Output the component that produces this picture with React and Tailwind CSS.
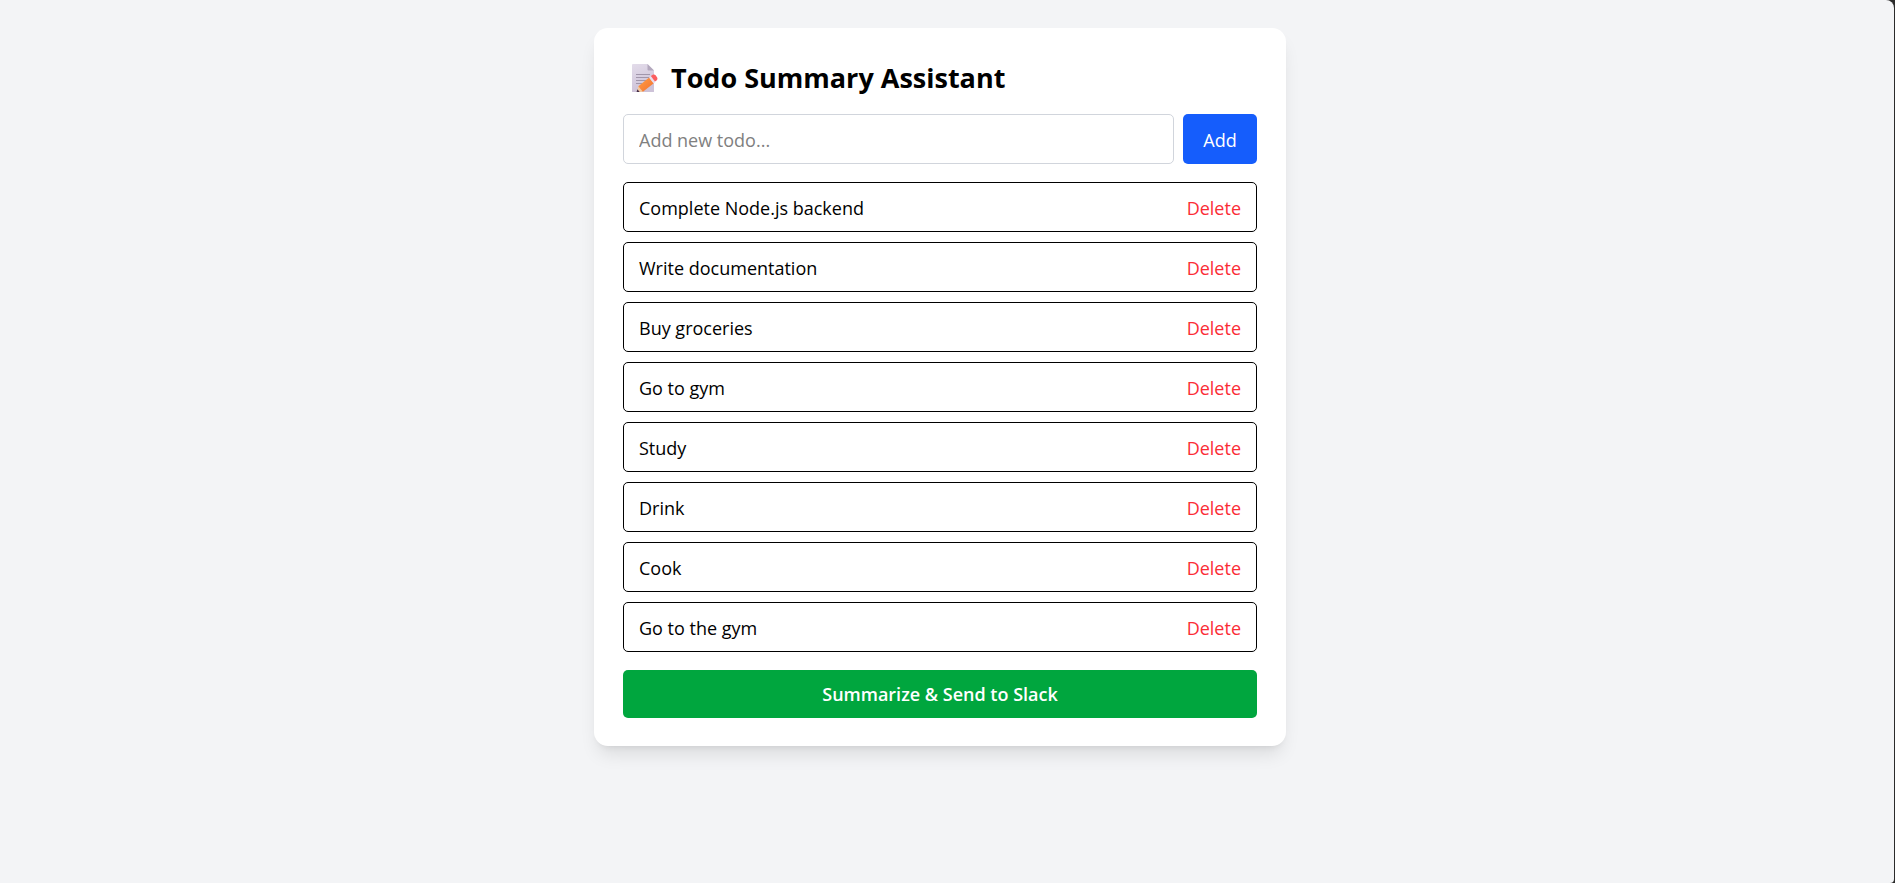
import { useState } from "react";

const initialTodos = [
  "Complete Node.js backend",
  "Write documentation",
  "Buy groceries",
  "Go to gym",
  "Study",
  "Drink",
  "Cook",
  "Go to the gym",
];

function MemoIcon() {
  return (
    <svg viewBox="0 0 26 28" className="h-7 w-[26px] shrink-0" aria-hidden="true">
      <defs>
        <linearGradient id="paper" x1="0" y1="0" x2="0.3" y2="1">
          <stop offset="0" stopColor="#e3dcea" />
          <stop offset="1" stopColor="#cdc2d8" />
        </linearGradient>
        <linearGradient id="pencil" x1="0" y1="0" x2="1" y2="1">
          <stop offset="0" stopColor="#ffa04a" />
          <stop offset="1" stopColor="#f4702c" />
        </linearGradient>
      </defs>
      <path d="M1 0H15.500L22 6.500V27.500A.5 .5 0 0 1 21.500 28H.5A.5 .5 0 0 1 0 27.500V1A1 1 0 0 1 1 0Z" fill="url(#paper)" />
      <path d="M15.500 0L22 6.500H16.500A1 1 0 0 1 15.500 5.500Z" fill="#b3a8bd" />
      <path d="M4 10.500H18M4 13.500H18M4 16.500H14M4 19.500H10" stroke="#a196ab" strokeWidth="1.200" />
      <path d="M4.800 28L6.300 21.900L11.200 28Z" fill="#f3c9a0" />
      <path d="M4.600 28L5.400 25.200L7.700 28Z" fill="#46304a" />
      <path d="M6.300 22.200L17.200 13.400L21.800 19.200L10.900 27.800Z" fill="url(#pencil)" />
      <path d="M17 13.600L19 12L23.600 17.800L21.600 19.400Z" fill="#e9dcec" />
      <path d="M18.900 12.100L20.700 10.800C21.800 10.100 22.800 10.400 23.600 11.300L25 13.200C25.700 14.200 25.500 15.500 24.700 16.200L22.900 17.600Z" fill="#fb5d5f" />
    </svg>
  );
}

export default function App() {
  const [todos, setTodos] = useState(initialTodos);
  const [text, setText] = useState("");

  const addTodo = (event) => {
    event.preventDefault();
    if (!text.trim()) return;
    setTodos([...todos, text.trim()]);
    setText("");
  };

  return (
    <div className="min-h-screen flex bg-[#2b2b2b] pr-px font-['Open_Sans','Noto_Sans',sans-serif] text-lg leading-7 text-black">
      <main className="flex-1 rounded-tr-lg rounded-br-sm bg-gray-100 pt-7 pr-3.5 pb-7">
        <div className="mx-auto w-full max-w-[692px] rounded-[14px] bg-white px-[29px] py-7 shadow-[0_12px_18px_-4px_rgb(0_0_0/0.1),0_5px_7px_-5px_rgb(0_0_0/0.1)]">
          <h1 className="mb-3.5 flex items-center gap-[13px] pl-[9px] text-[27px] leading-[44px] font-bold">
            <MemoIcon />
            Todo Summary Assistant
          </h1>
          <form onSubmit={addTodo} className="mb-[18px] flex gap-[9px]">
            <input
              type="text"
              aria-label="New todo"
              placeholder="Add new todo..."
              value={text}
              onChange={(event) => setText(event.target.value)}
              className="h-[50px] min-w-0 flex-1 rounded-[5px] border border-gray-300 px-[15px] pt-[11px] pb-[9px] placeholder:text-[#808080]"
            />
            <button type="submit" className="w-[74px] rounded-[5px] bg-[#155dfc] pt-[11px] pb-[9px] text-white">
              Add
            </button>
          </form>
          <ul className="mb-[18px] flex flex-col gap-2.5">
            {todos.map((todo, index) => (
              <li
                key={index}
                className="flex items-center justify-between rounded-[5px] border border-black px-[15px] pt-[11px] pb-[9px]"
              >
                <span>{todo}</span>
                <button
                  type="button"
                  aria-label={`Delete ${todo}`}
                  onClick={() => setTodos(todos.filter((_, i) => i !== index))}
                  className="text-[#fb2c36]"
                >
                  Delete
                </button>
              </li>
            ))}
          </ul>
          <button type="button" className="w-full rounded-[5px] bg-[#00a63e] py-2.5 font-semibold text-white">
            Summarize &amp; Send to Slack
          </button>
        </div>
      </main>
    </div>
  );
}
